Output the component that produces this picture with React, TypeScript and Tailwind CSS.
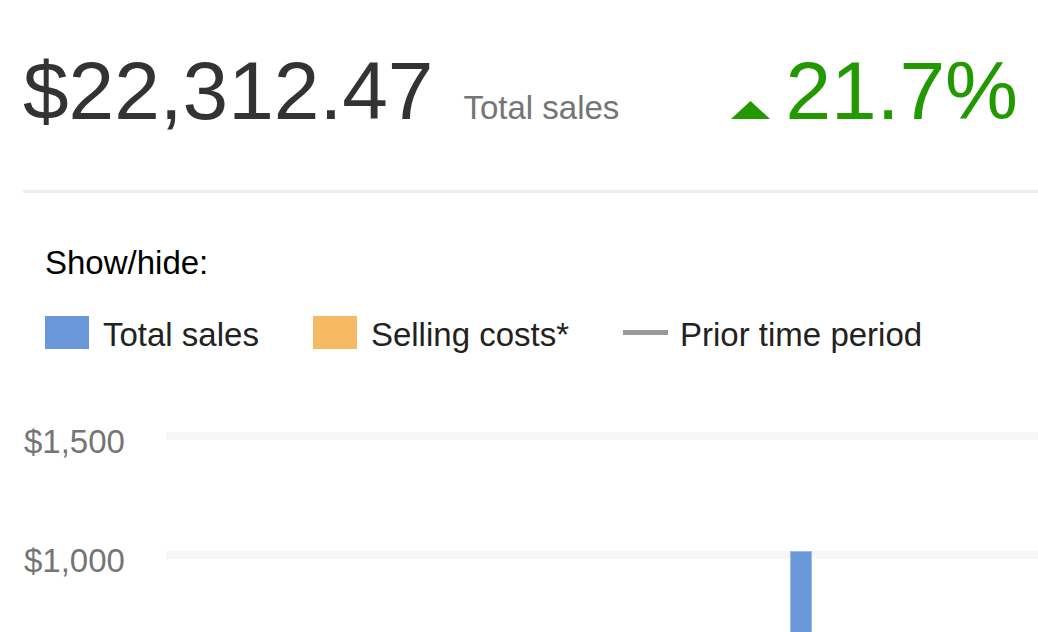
export default function App() {
  const ticks = ["$1,500", "$1,000"];

  return (
    <div className="h-[632px] w-[1038px] overflow-hidden bg-white font-['Liberation_Sans',Arial,sans-serif]">
      <div className="pl-[23px] pt-[50px]">
        <div className="flex items-baseline justify-between pr-[20px]">
          <div className="flex items-baseline">
            <span className="text-[82px] leading-none text-[#333333]">$22,312.47</span>
            <span className="ml-[30px] text-[33px] leading-none text-[#757575]">Total sales</span>
          </div>
          <div className="flex items-baseline">
            <svg width="39" height="18" viewBox="0 0 39 18" className="mr-[15px] mb-[1px]">
              <polygon points="0,18 19.5,0 39,18" fill="#229900" />
            </svg>
            <span className="text-[82px] leading-none text-[#229900]">21.7%</span>
          </div>
        </div>
        <div className="mt-[58px] h-[3px] bg-[#eeeeee]" />
      </div>

      <div className="pl-[45px] pt-[53px]">
        <div className="text-[33px] leading-none text-black">Show/hide:</div>
        <div className="mt-[35px] flex items-center">
          <div className="flex items-center">
            <span className="h-[33px] w-[44px] bg-[#6a98d8]" />
            <span className="ml-[14px] mt-[4px] text-[33px] leading-none text-[#222222]">Total sales</span>
          </div>
          <div className="ml-[54px] flex items-center">
            <span className="h-[33px] w-[44px] bg-[#f6b964]" />
            <span className="ml-[14px] mt-[4px] text-[33px] leading-none text-[#222222]">Selling costs*</span>
          </div>
          <div className="ml-[54px] flex items-center">
            <span className="h-[5px] w-[45px] bg-[#999999]" />
            <span className="ml-[12px] mt-[4px] text-[33px] leading-none text-[#222222]">Prior time period</span>
          </div>
        </div>
      </div>

      <div className="relative mt-[74px] pl-[24px]">
        {ticks.map((t) => (
          <div key={t} className="flex h-[119px] items-start">
            <span className="w-[142px] text-[33px] leading-none text-[#757575]">{t}</span>
            <span className="mt-[7px] h-[8px] flex-1 bg-[#f7f7f7]" />
          </div>
        ))}
        <div className="absolute left-[790px] top-[126px] h-[120px] w-[22px] border border-[#9dbbe6] bg-[#6a98d8]" />
      </div>
    </div>
  );
}
